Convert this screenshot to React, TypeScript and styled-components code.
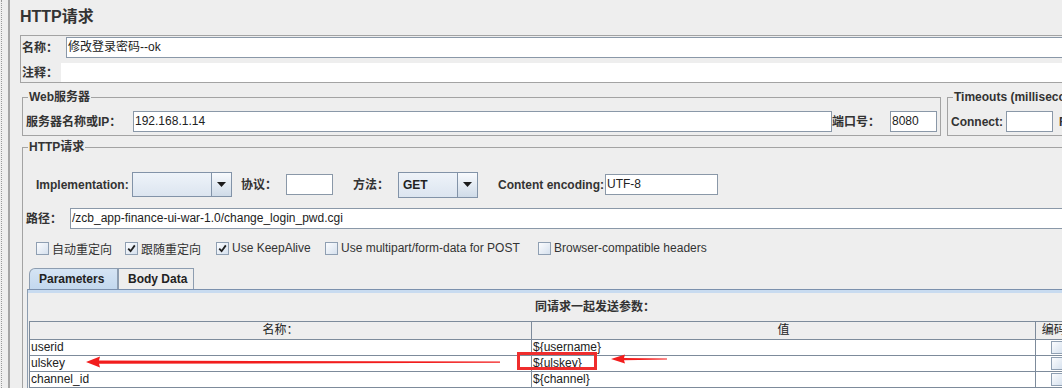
import React from 'react'
import styled, { createGlobalStyle } from 'styled-components'

const GlobalStyle = createGlobalStyle`
  html, body {
    margin: 0;
    padding: 0;
    background: #eeeeee;
    overflow: hidden;
  }
  body {
    font-family: "Liberation Sans", Arial, "Noto Sans CJK SC", sans-serif;
    font-size: 12px;
    color: #333333;
  }
  * {
    box-sizing: border-box;
  }
`

const Page = styled.div`
  display: flex;
  width: 1200px;
  height: 388px;
`
const Gutter = styled.div`
  flex: none;
  width: 9px;
  margin-left: 1px;
  border-left: 1px dotted #9a9a9a;
  border-right: 2px solid #a6a6a6;
`
const Content = styled.div`
  flex: 1;
  min-width: 0;
  padding-left: 10px;
`
const Title = styled.div`
  height: 35px;
  padding-top: 7px;
  font-size: 16px;
  line-height: 20px;
  font-weight: bold;
`
const NamePanel = styled.div`
  display: flex;
  flex-direction: column;
  height: 48px;
  border: 1px solid #a3a3a3;
  padding: 1px 0 0 1px;
`
const Row = styled.div<{ $h?: number; $mt?: number; $pl?: number }>`
  display: flex;
  align-items: center;
  height: ${p => p.$h ?? 21}px;
  margin-top: ${p => p.$mt ?? 0}px;
  padding-left: ${p => p.$pl ?? 0}px;
`
const Label = styled.span<{ $w?: number; $ml?: number; $bold?: boolean }>`
  flex: none;
  width: ${p => (p.$w ? `${p.$w}px` : 'auto')};
  margin-left: ${p => p.$ml ?? 0}px;
  font-weight: ${p => (p.$bold === false ? 'normal' : 'bold')};
  white-space: nowrap;
  line-height: 16px;
`
const Field = styled.div<{ $w?: number }>`
  ${p => (p.$w ? `flex: none; width: ${p.$w}px;` : 'flex: 1;')}
  height: 21px;
  background: #ffffff;
  border: 1px solid #8a98a8;
  padding-left: 1px;
  line-height: 19px;
  color: #222222;
  white-space: nowrap;
  overflow: hidden;
`
const CommentArea = styled.div`
  flex: 1;
  height: 19px;
  background: #ffffff;
`
const ServerRow = styled.div`
  display: flex;
  gap: 6px;
  margin-top: 6px;
  padding-left: 2px;
`
const Group = styled.fieldset<{ $w?: number; $mt?: number }>`
  margin: ${p => p.$mt ?? 0}px 0 0 0;
  padding: 6px 2px 3px 3px;
  border: 1px solid #a3a3a3;
  min-width: 0;
  ${p => (p.$w ? `flex: none; width: ${p.$w}px;` : 'flex: 1;')}
`
const Legend = styled.legend`
  margin-left: 2px;
  padding: 0 1px;
  font-size: 12px;
  line-height: 16px;
  font-weight: bold;
  white-space: nowrap;
`
const HttpGroup = styled(Group)`
  margin-left: 2px;
  padding: 0 0 0 3px;
  height: 260px;
`
const Combo = styled.div<{ $w: number; $h: number }>`
  flex: none;
  display: flex;
  width: ${p => p.$w}px;
  height: ${p => p.$h}px;
  border: 1px solid #8293a8;
  background: linear-gradient(#eef3f9, #dce5f0);
`
const ComboText = styled.div`
  flex: 1;
  padding-left: 4px;
  font-weight: bold;
  color: #222222;
  display: flex;
  align-items: center;
`
const ComboButton = styled.div`
  flex: none;
  width: 20px;
  border-left: 1px solid #8293a8;
  background: linear-gradient(#f8fafd, #cfdbe8);
  display: flex;
  align-items: center;
  justify-content: center;
`
const CheckRow = styled.div`
  display: flex;
  align-items: center;
  height: 16px;
  margin-top: 11px;
  padding-left: 10px;
`
const CheckItem = styled.label<{ $w?: number }>`
  flex: none;
  display: flex;
  align-items: center;
  gap: 3px;
  width: ${p => (p.$w ? `${p.$w}px` : 'auto')};
  white-space: nowrap;
`
const Box = styled.span`
  flex: none;
  width: 13px;
  height: 13px;
  border: 1px solid #8f9fb2;
  background: linear-gradient(135deg, #fbfcfe, #d6e1ee);
  display: flex;
  align-items: center;
  justify-content: center;
`
const Tabs = styled.div`
  display: flex;
  align-items: flex-end;
  height: 21px;
  margin-top: 12px;
  padding-left: 3px;
`
const Tab = styled.div<{ $w: number; $active?: boolean }>`
  flex: none;
  width: ${p => p.$w}px;
  height: 21px;
  padding-left: 9px;
  border: 1px solid #8d9db0;
  border-bottom: none;
  border-top-left-radius: ${p => (p.$active ? 6 : 0)}px;
  background: ${p => (p.$active ? 'linear-gradient(#d5e4f4, #c3d8ee)' : '#eeeeee')};
  font-weight: bold;
  line-height: 20px;
  color: #222222;
`
const TabPanel = styled.div`
  margin-left: 1px;
  width: 1134px;
  height: 110px;
  border-top: 1px solid #7b90ad;
  border-left: 1px solid #8d9db0;
`
const PanelBody = styled.div`
  height: 100%;
  border-top: 3px solid #c8dbf0;
  padding-left: 1px;
`
const PanelHeader = styled.div`
  height: 28px;
  line-height: 28px;
  text-align: center;
  font-weight: bold;
`
const TableWrap = styled.div`
  position: relative;
  width: 1130px;
`
const Grid = styled.div`
  display: grid;
  grid-template-columns: 502px 504px 43px 80px;
  border-top: 1px solid #7d8b9b;
  border-left: 1px solid #7d8b9b;
`
const Cell = styled.div<{ $head?: boolean; $center?: boolean }>`
  height: ${p => (p.$head ? 18 : 16)}px;
  border-right: 1px solid #7d8b9b;
  border-bottom: 1px solid #7d8b9b;
  background: ${p => (p.$head ? '#eeeeee' : '#ffffff')};
  padding-left: ${p => (p.$center ? 0 : 1)}px;
  line-height: ${p => (p.$head ? 17 : 15)}px;
  display: flex;
  align-items: center;
  justify-content: ${p => (p.$center ? 'center' : 'flex-start')};
  color: #222222;
  white-space: nowrap;
  overflow: hidden;
`
const Marks = styled.svg`
  position: absolute;
  left: 0;
  top: 0;
  width: 700px;
  height: 70px;
  overflow: visible;
  pointer-events: none;
`

function Arrow() {
  return (
    <svg width="9" height="5" viewBox="0 0 9 5">
      <polygon points="0,0 9,0 4.5,5" fill="#1a1a1a" />
    </svg>
  )
}

function Check({ on, label, w }: { on?: boolean; label?: string; w?: number }) {
  return (
    <CheckItem $w={w}>
      <Box>
        {on && (
          <svg width="9" height="9" viewBox="0 0 9 9">
            <path d="M1.2 4.6 L3.6 7.2 L7.8 1.4" stroke="#1f1f1f" strokeWidth="1.8" fill="none" />
          </svg>
        )}
      </Box>
      {label}
    </CheckItem>
  )
}

const params = [
  { name: 'userid', value: '${username}' },
  { name: 'ulskey', value: '${ulskey}' },
  { name: 'channel_id', value: '${channel}' },
]

export default function App() {
  return (
    <>
      <GlobalStyle />
      <Page>
        <Gutter />
        <Content>
          <Title>HTTP请求</Title>
          <NamePanel>
            <Row>
              <Label $w={44}>名称：</Label>
              <Field>修改登录密码--ok</Field>
            </Row>
            <Row $h={19} $mt={5}>
              <Label $w={39}>注释：</Label>
              <CommentArea />
            </Row>
          </NamePanel>

          <ServerRow>
            <Group $w={919}>
              <Legend>Web服务器</Legend>
              <Row>
                <Label $w={107}>服务器名称或IP：</Label>
                <Field $w={699}>192.168.1.14</Field>
                <Label $w={58}>端口号：</Label>
                <Field $w={47}>8080</Field>
              </Row>
            </Group>
            <Group>
              <Legend>Timeouts (milliseconds)</Legend>
              <Row>
                <Label $w={55}>Connect:</Label>
                <Field $w={47} />
                <Label $ml={6}>Response:</Label>
              </Row>
            </Group>
          </ServerRow>

          <HttpGroup $mt={3}>
            <Legend>HTTP请求</Legend>
            <Row $h={27} $mt={16} $pl={10}>
              <Label $w={96}>Implementation:</Label>
              <Combo $w={100} $h={25}>
                <ComboText />
                <ComboButton>
                  <Arrow />
                </ComboButton>
              </Combo>
              <Label $w={45} $ml={9}>协议：</Label>
              <Field $w={47} />
              <Label $w={45} $ml={20}>方法：</Label>
              <Combo $w={80} $h={26}>
                <ComboText>GET</ComboText>
                <ComboButton>
                  <Arrow />
                </ComboButton>
              </Combo>
              <Label $w={107} $ml={20}>Content encoding:</Label>
              <Field $w={113}>UTF-8</Field>
            </Row>
            <Row $mt={10}>
              <Label $w={44}>路径：</Label>
              <Field>/zcb_app-finance-ui-war-1.0/change_login_pwd.cgi</Field>
            </Row>
            <CheckRow>
              <Check w={89} label="自动重定向" />
              <Check w={91} on label="跟随重定向" />
              <Check w={109} on label="Use KeepAlive" />
              <Check w={213} label="Use multipart/form-data for POST" />
              <Check label="Browser-compatible headers" />
            </CheckRow>
            <Tabs>
              <Tab $w={89} $active>Parameters</Tab>
              <Tab $w={76}>Body Data</Tab>
            </Tabs>
            <TabPanel>
              <PanelBody>
                <PanelHeader>同请求一起发送参数：</PanelHeader>
                <TableWrap>
                  <Grid>
                    <Cell $head $center>名称：</Cell>
                    <Cell $head $center>值</Cell>
                    <Cell $head $center>编码?</Cell>
                    <Cell $head $center>包含等于?</Cell>
                    {params.map(p => (
                      <React.Fragment key={p.name}>
                        <Cell>{p.name}</Cell>
                        <Cell>{p.value}</Cell>
                        <Cell $center>
                          <Box />
                        </Cell>
                        <Cell $center>
                          <Check on />
                        </Cell>
                      </React.Fragment>
                    ))}
                  </Grid>
                  <Marks viewBox="0 0 700 70">
                    <path d="M57 41 L71 35.5 L70 39.6 L471 40.6 L471 41.8 L70 42.8 L71 46.5 Z" fill="#f21d1d" />
                    <path d="M582 38 L596 33.5 L595 37 L638 37.4 L638 38.6 L595 39.2 L596 42.5 Z" fill="#f21d1d" />
                    <rect x="489.5" y="32.5" width="77" height="15" fill="none" stroke="#ef2d2d" strokeWidth="3" />
                  </Marks>
                </TableWrap>
              </PanelBody>
            </TabPanel>
          </HttpGroup>
        </Content>
      </Page>
    </>
  )
}
